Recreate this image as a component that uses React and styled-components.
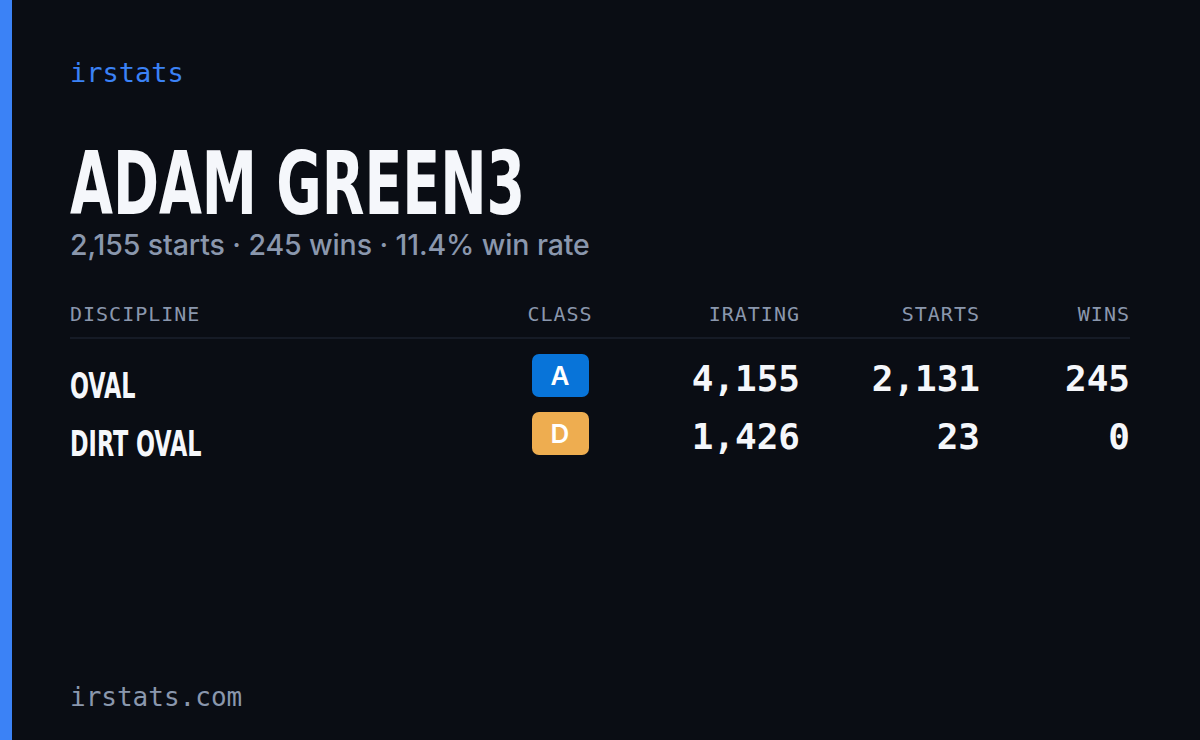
import React from "react";
import styled, { createGlobalStyle } from "styled-components";

const Global = createGlobalStyle`
  html, body {
    margin: 0;
    padding: 0;
    background: #0a0d14;
  }
`;

const mono = `"DejaVu Sans Mono", "Liberation Mono", monospace`;
const narrow = `"DejaVu Sans Condensed", "Liberation Sans", sans-serif`;

const rows = [
  { name: "Oval", cls: "A", irating: "4,155", starts: "2,131", wins: "245" },
  { name: "Dirt Oval", cls: "D", irating: "1,426", starts: "23", wins: "0" },
];

const App = () => {
  return (
    <>
      <Global />
      <Card>
        <Bar />
        <Main>
          <Brand>irstats</Brand>
          <Name>ADAM GREEN3</Name>
          <Summary>2,155 starts · 245 wins · 11.4% win rate</Summary>
          <Table>
            <HeadRow>
              <Th>Discipline</Th>
              <Th align="center">Class</Th>
              <Th align="right">iRating</Th>
              <Th align="right">Starts</Th>
              <Th align="right">Wins</Th>
            </HeadRow>
            <Body>
              {rows.map((r) => (
                <Row key={r.name}>
                  <Discipline>{r.name}</Discipline>
                  <ClassCell>
                    <Badge cls={r.cls}>{r.cls}</Badge>
                  </ClassCell>
                  <Num>{r.irating}</Num>
                  <Num>{r.starts}</Num>
                  <Num>{r.wins}</Num>
                </Row>
              ))}
            </Body>
          </Table>
          <Footer>irstats.com</Footer>
        </Main>
      </Card>
    </>
  );
};

export default App;

const Card = styled.div`
  width: 1200px;
  height: 740px;
  display: flex;
  background: #0a0d14;
  overflow: hidden;
`;

const Bar = styled.div`
  width: 12px;
  background: #3b82f6;
  flex-shrink: 0;
`;

const Main = styled.div`
  flex: 1;
  display: flex;
  flex-direction: column;
  padding: 56px 70px 26px 58px;
`;

const Brand = styled.div`
  font-family: ${mono};
  font-size: 27px;
  line-height: 34px;
  color: #3b82f6;
`;

const Name = styled.h1`
  margin: 50px 0 0;
  font-family: ${narrow};
  font-weight: 700;
  font-size: 88px;
  line-height: 88px;
  color: #f5f7fb;
  transform: scaleX(0.7);
  transform-origin: left center;
  white-space: nowrap;
`;

const Summary = styled.div`
  font-family: Inter, "Noto Sans", sans-serif;
  font-size: 28.5px;
  font-weight: 500;
  line-height: 34px;
  letter-spacing: -0.1px;
  color: #8a97ad;
`;

const Table = styled.div`
  margin-top: 39px;
`;

const cols = `425px 130px 175px 180px 150px`;

const HeadRow = styled.div`
  display: grid;
  grid-template-columns: ${cols};
  padding-bottom: 10px;
  border-bottom: 2px solid #161b26;
`;

const Th = styled.div`
  font-family: ${mono};
  font-size: 20px;
  line-height: 26px;
  letter-spacing: 1px;
  text-transform: uppercase;
  color: #8a97ad;
  text-align: ${(p) => p.align || "left"};
`;

const Body = styled.div`
  padding-top: 11px;
  display: flex;
  flex-direction: column;
  gap: 14px;
`;

const Row = styled.div`
  display: grid;
  grid-template-columns: ${cols};
  align-items: center;
  height: 44px;
`;

const Discipline = styled.div`
  font-family: ${narrow};
  font-weight: 700;
  font-size: 35px;
  text-transform: uppercase;
  color: #f5f7fb;
  transform: scaleX(0.71);
  transform-origin: left center;
  padding-top: 16px;
`;

const ClassCell = styled.div`
  display: flex;
  justify-content: center;
  padding-bottom: 6px;
`;

const Badge = styled.div`
  width: 57px;
  height: 43px;
  border-radius: 7px;
  display: flex;
  align-items: center;
  justify-content: center;
  font-family: Inter, "Noto Sans", sans-serif;
  font-weight: 600;
  font-size: 26px;
  color: #ffffff;
  background: ${(p) => (p.cls === "A" ? "#0874d9" : "#eead50")};
`;

const Num = styled.div`
  font-family: ${mono};
  font-size: 36px;
  font-weight: 700;
  color: #f5f7fb;
  text-align: right;
`;

const Footer = styled.div`
  margin-top: auto;
  font-family: ${mono};
  font-size: 26px;
  line-height: 34px;
  color: #8a97ad;
`;
